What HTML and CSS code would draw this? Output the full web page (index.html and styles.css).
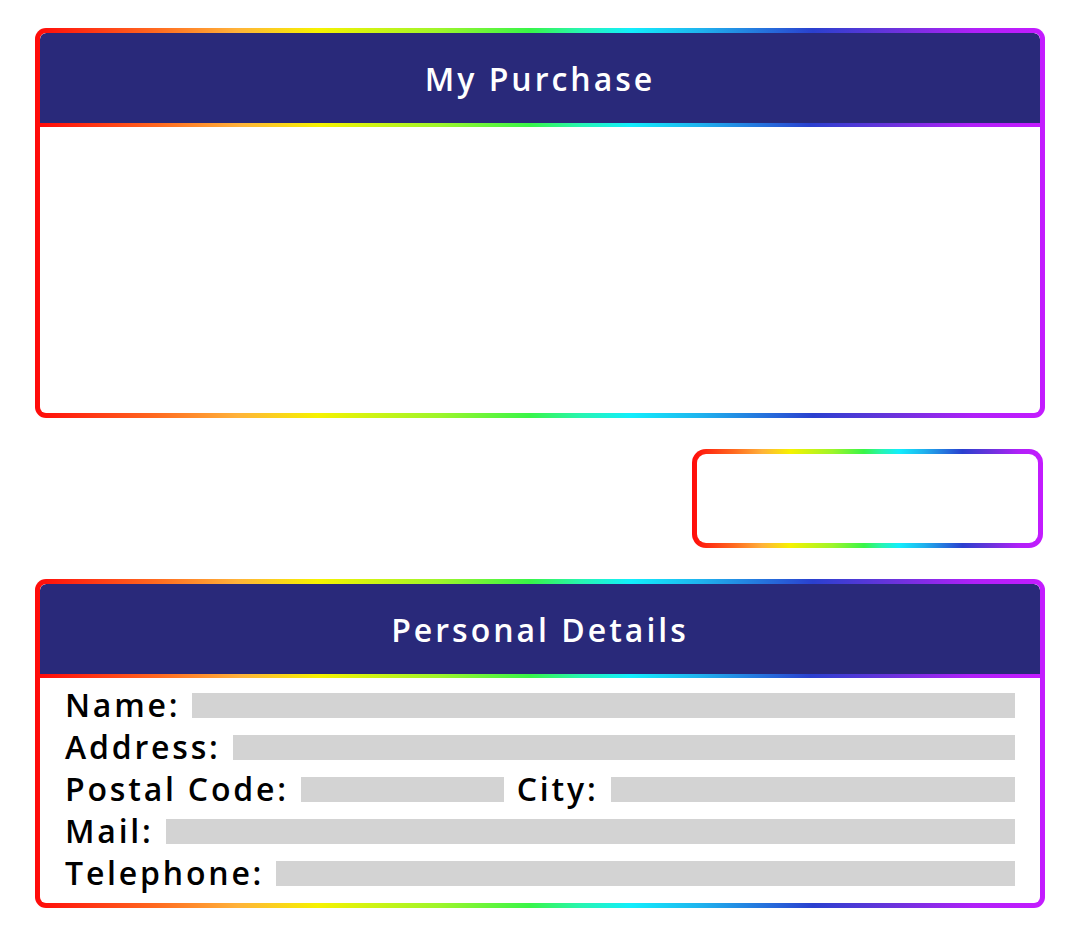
FILE: index.html
```html
<!DOCTYPE html>
<html lang="en">
<head>
<meta charset="utf-8">
<title>My Purchase</title>
<link rel="stylesheet" href="styles.css">
</head>
<body>
<main class="page">
  <section class="card card-purchase">
    <header class="card-header"><h2>My Purchase</h2></header>
    <div class="card-body purchase-body"></div>
  </section>

  <div class="summary-row">
    <div class="summary-box"></div>
  </div>

  <section class="card card-details">
    <header class="card-header"><h2>Personal Details</h2></header>
    <div class="card-body details-body">
      <div class="row"><span class="label">Name:</span><span class="field"></span></div>
      <div class="row"><span class="label">Address:</span><span class="field"></span></div>
      <div class="row"><span class="label">Postal Code:</span><span class="field field-postal"></span><span class="label label-city">City:</span><span class="field"></span></div>
      <div class="row"><span class="label">Mail:</span><span class="field"></span></div>
      <div class="row"><span class="label">Telephone:</span><span class="field"></span></div>
    </div>
  </section>
</main>
</body>
</html>
```

FILE: styles.css
```css
:root {
  --rainbow: linear-gradient(90deg,
    #ff0a0a 0%,
    #ff6a20 12%,
    #ffb23a 20%,
    #f6f200 28%,
    #9ef52a 40%,
    #38f548 49%,
    #27f5b0 54%,
    #12eefc 59%,
    #1fb2ee 66%,
    #2a40cf 77%,
    #6a33dc 85%,
    #b020f8 93%,
    #c41bff 100%);
  --navy: #29297a;
}

* { box-sizing: border-box; }

html, body {
  margin: 0;
  padding: 0;
  background: #ffffff;
}

body {
  font-family: "Open Sans", "Noto Sans", sans-serif;
  color: #000;
}

.page {
  width: 1080px;
  padding: 28px 35px 0 35px;
  display: flex;
  flex-direction: column;
}

.card {
  border: 5px solid transparent;
  border-radius: 11px;
  background:
    linear-gradient(#fff, #fff) padding-box,
    var(--rainbow) border-box;
  display: flex;
  flex-direction: column;
  overflow: hidden;
}

.card-header {
  height: 94px;
  border-bottom: 4px solid transparent;
  border-radius: 6px 6px 0 0;
  background:
    linear-gradient(var(--navy), var(--navy)) padding-box,
    var(--rainbow) border-box;
  display: flex;
  align-items: center;
  justify-content: center;
}

.card-header h2 {
  margin: 0;
  color: #fff;
  font-size: 32px;
  font-weight: 600;
  letter-spacing: 3px;
  line-height: 1;
  padding-top: 1px;
}

.purchase-body {
  height: 286px;
}

.summary-row {
  display: flex;
  justify-content: flex-end;
  padding: 31px 2px 31px 0;
}

.summary-box {
  width: 351px;
  height: 99px;
  border: 5px solid transparent;
  border-radius: 14px;
  background:
    linear-gradient(#fff, #fff) padding-box,
    var(--rainbow) border-box;
}

.details-body {
  padding: 6px 25px 9px 25px;
  display: flex;
  flex-direction: column;
}

.row {
  display: flex;
  align-items: center;
  height: 42px;
}

.label {
  font-size: 32px;
  font-weight: 600;
  letter-spacing: 2.8px;
  line-height: 42px;
  white-space: nowrap;
  margin-right: 12px;
}

.field {
  flex: 1;
  height: 25px;
  background: #d3d3d3;
}

.field-postal {
  flex: 0 0 203px;
  margin-right: 13px;
}

.label-city {
  margin-right: 12px;
}
```
